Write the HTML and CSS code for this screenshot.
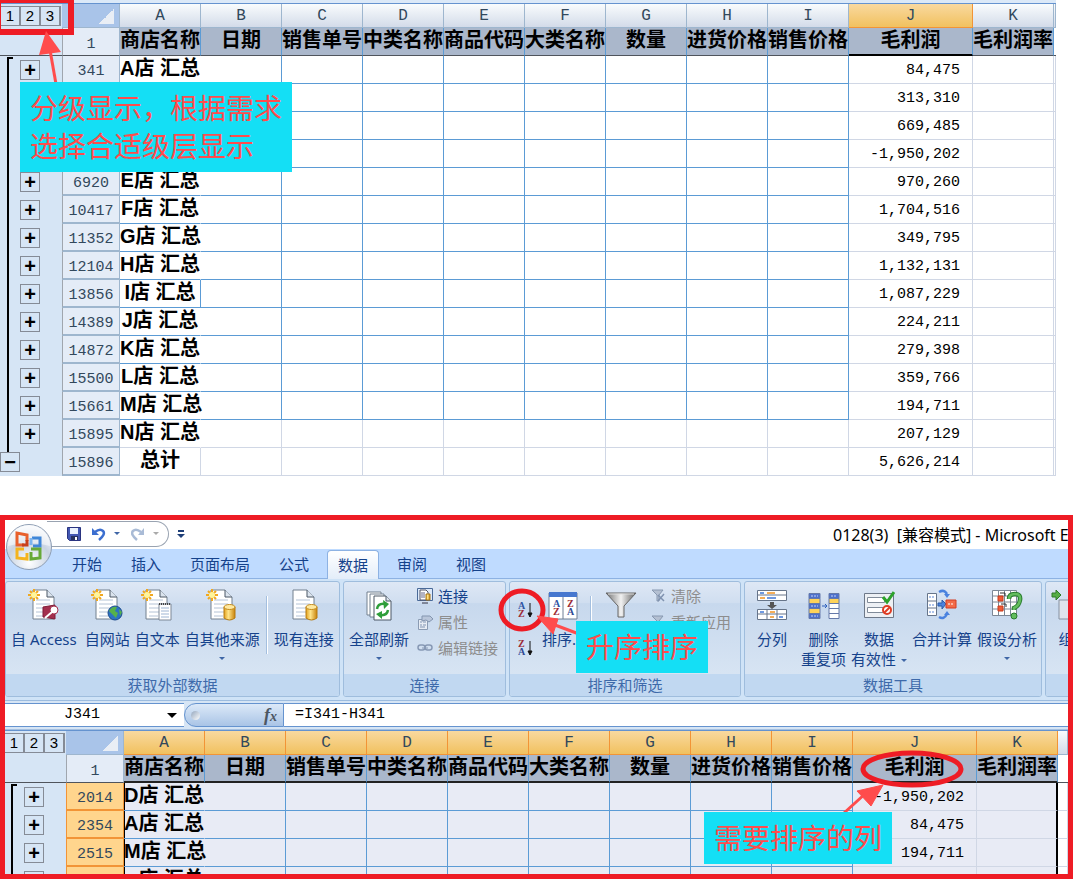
FILE: index.html
```html
<!DOCTYPE html>
<html lang="zh-CN">
<head>
<meta charset="utf-8">
<title>分级显示与升序排序</title>
<link rel="stylesheet" href="styles.css">
</head>
<body>
<svg class="defs" aria-hidden="true">
  <defs>
    <linearGradient id="gold" x1="0" x2="1"><stop offset="0" stop-color="#e2a01c"/><stop offset=".4" stop-color="#ffe58a"/><stop offset="1" stop-color="#c9830b"/></linearGradient>
    <linearGradient id="steel" x1="0" x2="1"><stop offset="0" stop-color="#707070"/><stop offset=".5" stop-color="#f2f2f2"/><stop offset="1" stop-color="#606060"/></linearGradient>
    <g id="page"><path d="M5 1h14l7 7v22H5z" fill="#fff" stroke="#73808f"/><path d="M19 1v7h7" fill="#dbe4ee" stroke="#4d5966"/><path d="M8 11h14M8 15h14M8 19h14M8 23h14M8 27h9" stroke="#b4c3d6"/></g>
    <g id="spark"><path d="M6 0v12M0 6h12M2 2l8 8M10 2l-8 8" stroke="#f0a820" stroke-width="2"/><circle cx="6" cy="6" r="3" fill="#fff59a"/></g>
    <g id="drum"><path d="M0 2v11q5.500 4 11 0V2z" fill="url(#gold)" stroke="#b57b12"/><ellipse cx="5.500" cy="2" rx="5.500" ry="2.500" fill="#ffe9a0" stroke="#c38a1c"/></g>
    <g id="az" font-family="Liberation Serif" font-weight="700" font-size="10"><text x="0" y="8" fill="#2f55a4">A</text><text x="0" y="16" fill="#9c2a35">Z</text></g>
    <g id="za" font-family="Liberation Serif" font-weight="700" font-size="10"><text x="0" y="8" fill="#9c2a35">Z</text><text x="0" y="16" fill="#2f4a94">A</text></g>
    <path id="down" d="M0 0v12M-2 10h4l-2 4z" stroke="#111" fill="#111"/>
  </defs>
</svg>

<section class="outline-demo">
<table class="sheet">
<colgroup><col class="c-gut"><col class="c-num"><col class="c-std" span="9"><col class="c-wide"><col class="c-std"><col></colgroup>
<thead>
<tr class="letters"><td class="gut levels"><div><button>1</button><button>2</button><button>3</button></div></td><th class="corner"></th><th>A</th><th>B</th><th>C</th><th>D</th><th>E</th><th>F</th><th>G</th><th>H</th><th>I</th><th class="on">J</th><th>K</th><th></th></tr>
<tr class="titles"><td class="gut"></td><th class="num">1</th><th>商店名称</th><th>日期</th><th>销售单号</th><th>中类名称</th><th>商品代码</th><th>大类名称</th><th>数量</th><th>进货价格</th><th>销售价格</th><th class="picked">毛利润</th><th>毛利润率</th><th class="rest"></th></tr>
</thead>
<tbody>
<tr><td class="gut line first"><button>+</button></td><th class="num">341</th><td class="shop">A店 汇总</td><td></td><td></td><td></td><td></td><td></td><td></td><td></td><td></td><td class="val">84,475</td><td class="pale"></td><td class="pale"></td></tr>
<tr><td class="gut line"></td><th class="num"></th><td class="shop"></td><td></td><td></td><td></td><td></td><td></td><td></td><td></td><td></td><td class="val">313,310</td><td class="pale"></td><td class="pale"></td></tr>
<tr><td class="gut line"></td><th class="num"></th><td class="shop"></td><td></td><td></td><td></td><td></td><td></td><td></td><td></td><td></td><td class="val">669,485</td><td class="pale"></td><td class="pale"></td></tr>
<tr><td class="gut line"></td><th class="num"></th><td class="shop"></td><td></td><td></td><td></td><td></td><td></td><td></td><td></td><td></td><td class="val">-1,950,202</td><td class="pale"></td><td class="pale"></td></tr>
<tr><td class="gut line"><button>+</button></td><th class="num">6920</th><td class="shop">E店 汇总</td><td></td><td></td><td></td><td></td><td></td><td></td><td></td><td></td><td class="val">970,260</td><td class="pale"></td><td class="pale"></td></tr>
<tr><td class="gut line"><button>+</button></td><th class="num">10417</th><td class="shop">F店 汇总</td><td></td><td></td><td></td><td></td><td></td><td></td><td></td><td></td><td class="val">1,704,516</td><td class="pale"></td><td class="pale"></td></tr>
<tr><td class="gut line"><button>+</button></td><th class="num">11352</th><td class="shop">G店 汇总</td><td></td><td></td><td></td><td></td><td></td><td></td><td></td><td></td><td class="val">349,795</td><td class="pale"></td><td class="pale"></td></tr>
<tr><td class="gut line"><button>+</button></td><th class="num">12104</th><td class="shop">H店 汇总</td><td></td><td></td><td></td><td></td><td></td><td></td><td></td><td></td><td class="val">1,132,131</td><td class="pale"></td><td class="pale"></td></tr>
<tr><td class="gut line"><button>+</button></td><th class="num">13856</th><td class="shop closed">I店 汇总</td><td></td><td></td><td></td><td></td><td></td><td></td><td></td><td></td><td class="val">1,087,229</td><td class="pale"></td><td class="pale"></td></tr>
<tr><td class="gut line"><button>+</button></td><th class="num">14389</th><td class="shop">J店 汇总</td><td></td><td></td><td></td><td></td><td></td><td></td><td></td><td></td><td class="val">224,211</td><td class="pale"></td><td class="pale"></td></tr>
<tr><td class="gut line"><button>+</button></td><th class="num">14872</th><td class="shop">K店 汇总</td><td></td><td></td><td></td><td></td><td></td><td></td><td></td><td></td><td class="val">279,398</td><td class="pale"></td><td class="pale"></td></tr>
<tr><td class="gut line"><button>+</button></td><th class="num">15500</th><td class="shop">L店 汇总</td><td></td><td></td><td></td><td></td><td></td><td></td><td></td><td></td><td class="val">359,766</td><td class="pale"></td><td class="pale"></td></tr>
<tr><td class="gut line"><button>+</button></td><th class="num">15661</th><td class="shop">M店 汇总</td><td></td><td></td><td></td><td></td><td></td><td></td><td></td><td></td><td class="val">194,711</td><td class="pale"></td><td class="pale"></td></tr>
<tr class="faint"><td class="gut line"><button>+</button></td><th class="num">15895</th><td class="shop">N店 汇总</td><td></td><td></td><td></td><td></td><td></td><td></td><td></td><td></td><td class="val">207,129</td><td class="pale"></td><td class="pale"></td></tr>
<tr class="faint"><td class="gut last"><button>−</button></td><th class="num">15896</th><td class="shop closed">总计</td><td></td><td></td><td></td><td></td><td></td><td></td><td></td><td></td><td class="val">5,626,214</td><td class="pale"></td><td class="pale"></td></tr>
</tbody>
</table>
<svg class="marks" aria-hidden="true"><rect x="-2" y="0" width="73" height="32" fill="none" stroke="#ee1c25" stroke-width="6"/><path d="M50 50l6 34" stroke="#ff4c4c" stroke-width="3"/><path d="M46 31l15 21-22 3z" fill="#ff4c4c"/></svg>
<p class="note note-levels">分级显示，根据需求<br>选择合适级层显示</p>
</section>

<section class="excel">
<header class="titlebar">
  <div class="quick">
    <button aria-label="保存"><svg width="14" height="14"><path d="M.500 .500h13v13h-11l-2-2z" fill="#4257b2" stroke="#2a3480"/><path d="M3 1h8v6H3z" fill="#e9f1fd"/><path d="M4 9h7v4H4z" fill="#25305e"/><path d="M8 10h2v3H8z" fill="#fff"/></svg></button>
    <button aria-label="撤消"><svg width="14" height="14"><path d="M3 5q5-4 8-1t-4 9" fill="none" stroke="#3c6fd0" stroke-width="2.500"/><path d="M0 1v7h7z" fill="#3c6fd0"/></svg></button>
    <i class="tri"></i>
    <button aria-label="恢复"><svg width="14" height="14"><path d="M10 5q-5-4-8-1t4 9" fill="none" stroke="#a9bbd6" stroke-width="2.500"/><path d="M13 1v7H7z" fill="#a9bbd6"/></svg></button>
    <i class="tri dim"></i>
  </div>
  <button class="custom" aria-label="自定义快速访问工具栏"><svg width="8" height="9"><path d="M1 1h6" stroke="#1f3f78" stroke-width="2"/><path d="M0 4h8L4 8z" fill="#1f3f78"/></svg></button>
  <span class="doc">0128(3)&nbsp; [兼容模式] - Microsoft Ex</span>
</header>
<button class="orb" aria-label="Office 按钮"><svg width="48" height="48" viewBox="0 0 48 48"><defs><radialGradient id="orb" cx=".5" cy=".85" r=".8"><stop offset="0" stop-color="#fff"/><stop offset=".6" stop-color="#c8d3e2"/><stop offset="1" stop-color="#f4f7fb"/></radialGradient></defs><circle cx="24" cy="24" r="22.500" fill="url(#orb)" stroke="#8d9db3"/><path d="M3 23a21 21 0 0 1 42 0q-21-6-42 0z" fill="#fff" opacity=".5"/><g fill="none" stroke-width="3"><path d="M22 18v-6l-10-2v12h7" stroke="#e8602c"/><path d="M27 15h8v8h-7" stroke="#3f86d8"/><path d="M19 26h-7v9l10 1v-6" stroke="#f4b41e"/><path d="M26 26h9v9l-9 1v-7" stroke="#67a938"/><path d="M22 17v5h-5" stroke="#c8401c"/><path d="M26 22v-7" stroke="#7cb4ee"/></g></svg></button>
<nav class="tabs"><button>开始</button><button>插入</button><button>页面布局</button><button>公式</button><button class="active">数据</button><button>审阅</button><button>视图</button></nav>

<div class="ribbon">
  <div class="group g-ext"><div class="body">
    <button class="big"><svg width="32" height="32"><use href="#page"/><use href="#spark" x="0" y="0"/><path d="M15 18l12-2v14l-12-2z" fill="#a32f4d" stroke="#7f1d38"/><circle cx="26" cy="21" r="4" fill="#fff" stroke="#a32f4d"/><path d="M24 23l-7 6" stroke="#fff" stroke-width="2"/></svg><span>自 Access</span></button>
    <button class="big"><svg width="32" height="32"><use href="#page"/><use href="#spark"/><circle cx="24" cy="24" r="7" fill="#2c72c2" stroke="#1d4c8b"/><path d="M18 22q3-5 8-4l-2 4 3 2-2 5-4-4zM28 20l3 3-2 4z" fill="#56b14a"/></svg><span>自网站</span></button>
    <button class="big"><svg width="32" height="32"><use href="#page"/><use href="#spark"/><path d="M18 15h12v16H18z" fill="#fff" stroke="#7c8796"/><path d="M18 15h12" stroke="#444" stroke-dasharray="1 1" stroke-width="2"/><path d="M20 19h8M20 22h8M20 25h8M20 28h8" stroke="#9eb5d3"/></svg><span>自文本</span></button>
    <button class="big"><svg width="32" height="32"><use href="#page"/><use href="#spark"/><use href="#drum" x="18" y="16"/></svg><span>自其他来源</span><i class="tri"></i></button>
    <hr>
    <button class="big"><svg width="32" height="32"><use href="#page"/><use href="#drum" x="18" y="16"/></svg><span>现有连接</span></button>
  </div><h2>获取外部数据</h2></div>

  <div class="group g-con"><div class="body">
    <button class="big"><svg width="32" height="32"><path d="M4 3h14v23H4z" fill="#fff" stroke="#73808f"/><path d="M7 5h14v23H7z" fill="#fff" stroke="#73808f"/><path d="M11 7h12l5 5v19H11z" fill="#fff" stroke="#4d5966"/><path d="M23 7v5h5" fill="#dbe4ee" stroke="#4d5966"/><path d="M14 20q1-6 8-5M25 21q-1 6-8 5" fill="none" stroke="#2f9e3a" stroke-width="2.500"/><path d="M20 11l6 4-5 5zM19 30l-6-5 6-3z" fill="#2f9e3a"/></svg><span>全部刷新</span><i class="tri"></i></button>
    <div class="list">
      <button><svg width="16" height="16"><path d="M.500 .500h15v12H.500z" fill="#dce9fa" stroke="#4a6a98"/><path d="M3 2h6l2 2v8H3z" fill="#fff" stroke="#556"/><path d="M4 5h4M4 7h4M4 9h4" stroke="#668"/><path d="M9 6h4v6H9z" fill="url(#gold)" stroke="#a6761a"/><path d="M5 15h6" stroke="#334"/></svg>连接</button>
      <button disabled><svg width="16" height="16"><path d="M1.500 5.500h9v10h-9z" fill="#e7ecf4" stroke="#8a9bb3"/><path d="M3 8h2M3 11h2M6 8h3M6 11h3M3 13h5" stroke="#8195b3"/><path d="M5 2h8l3 3-4 3-3-2-4 1z" fill="#b9c6da" stroke="#8395af"/></svg>属性</button>
      <button disabled><svg width="16" height="16"><rect x="1" y="5" width="7" height="5" rx="2.500" fill="none" stroke="#8799b5" stroke-width="1.500"/><rect x="8" y="5" width="7" height="5" rx="2.500" fill="none" stroke="#8799b5" stroke-width="1.500"/><path d="M5 8h6" stroke="#8799b5"/></svg>编辑链接</button>
    </div>
  </div><h2>连接</h2></div>

  <div class="group g-sort"><div class="body">
    <div class="sorts">
      <button aria-label="升序"><svg width="16" height="17"><use href="#az"/><use href="#down" x="12" y="2"/></svg></button>
      <button aria-label="降序"><svg width="16" height="17"><use href="#za"/><use href="#down" x="12" y="2"/></svg></button>
    </div>
    <button class="big sort"><svg width="32" height="32"><path d="M2 4h28v26H2z" fill="#fff" stroke="#6f7f95"/><path d="M2 3h28v5H2z" fill="#4677cf"/><path d="M16 8v22" stroke="#6f7f95"/><use href="#az" x="6" y="10"/><use href="#za" x="20" y="10"/></svg><span>排序...</span></button>
    <hr>
    <button class="big filter" aria-label="筛选"><svg width="32" height="32"><path d="M1 4h30L19 17v11h-6V17z" fill="url(#steel)" stroke="#666"/><path d="M3 5h26" stroke="#ddd"/></svg></button>
    <div class="list">
      <button disabled><svg width="16" height="16"><path d="M2 2h11L9 7v6H7V7z" fill="#b4c0d2" stroke="#8798b0"/><path d="M8 7l6 6M14 6l-6 7" stroke="#8093b0" stroke-width="1.500"/></svg>清除</button>
      <button disabled><svg width="16" height="16"><path d="M2 2h11L9 7v6H7V7z" fill="#b4c0d2" stroke="#8798b0"/></svg>重新应用</button>
    </div>
  </div><h2>排序和筛选</h2></div>

  <div class="group g-tools"><div class="body">
    <button class="big"><svg width="32" height="32"><path d="M1.500 1.500h29v10h-29zM1.500 20.500h29v10h-29z" fill="#fff" stroke="#66758a"/><path d="M1 6h30M1 25h30M11 20v10M21 20v10" stroke="#66758a"/><path d="M4 4h4M11 9h9M4 23h4M23 28h4" stroke="#3f78d8" stroke-width="1.500"/><path d="M11 4h8M4 9h5M14 23h5M14 28h4" stroke="#f29422" stroke-width="1.500"/><path d="M14 13h4v3h3l-5 4-5-4h3z" fill="#555"/></svg><span>分列</span></button>
    <button class="big"><svg width="32" height="32"><g stroke="#6579a9"><path d="M1 4.500h11v5H1zM1 14.500h11v5H1zM1 24.500h11v5H1zM21 4.500h10v5H21z" fill="#4d70cb"/><path d="M1 9.500h11v5H1zM1 19.500h11v5H1zM21 9.500h10v5H21z" fill="#ffd35a"/><path d="M21 14.500h10v5H21zM21 19.500h10v5H21zM21 24.500h10v5H21z" fill="#fff"/></g><path d="M14 17h5M17 15l2 2-2 2" fill="none" stroke="#2e61bd"/><path d="M3 7h7M3 17h7M3 27h7M23 7h6" stroke="#c4d3f7" stroke-dasharray="2 1"/></svg><span>删除<br>重复项</span></button>
    <button class="big"><svg width="32" height="32"><path d="M1.500 4.500h29v24h-29z" fill="#edf0f4" stroke="#6d7888"/><path d="M4.500 8.500h17v5h-17zM4.500 18.500h17v5h-17z" fill="#fff" stroke="#808b99"/><path d="M20 8l4 5 7-10" fill="none" stroke="#2ca22c" stroke-width="3"/><circle cx="24" cy="21" r="4" fill="#fff" stroke="#df3d24" stroke-width="2"/><path d="M21 24l6-6" stroke="#df3d24" stroke-width="2"/></svg><span>数据<br>有效性 <i class="tri inline"></i></span></button>
    <button class="big"><svg width="32" height="32"><path d="M1.500 4.500h9v22h-9zM1.500 12h9M1.500 19h9" fill="#fff" stroke="#66758a"/><path d="M3 8h6M3 16h6M3 23h6" stroke="#5a87d8" stroke-dasharray="2 1"/><path d="M12 14h4v-3l4 4-4 5v-3h-4z" fill="#4a82df" stroke="#2d5ca9"/><path d="M20 11h10v8H20z" fill="#f36b48" stroke="#d33d22"/><path d="M22 15h6" stroke="#fff" stroke-dasharray="2 1"/><path d="M13 3q5-3 8 2M13 28q5 3 8-3" fill="none" stroke="#4a82df" stroke-width="2.500"/><path d="M18 5h6l-3 4zM18 26h6l-3-4z" fill="#4a82df"/></svg><span>合并计算</span></button>
    <button class="big"><svg width="32" height="32"><path d="M1.500 1.500h24v25h-24zM7.500 1v26M13.500 1v26M19.500 1v26M1 7h25M1 13h25M1 20h25" fill="#fff" stroke="#7d8896"/><path d="M7 7h5v5H7zM7 17h5v5H7z" fill="#f05a35" stroke="#c63a1b"/><path d="M9 4h5v3M10 15h5v3" fill="none" stroke="#333"/><path d="M18 10q0-5 6-5t5 6-6 8v2" fill="none" stroke="#287c2e" stroke-width="4.500"/><path d="M18 10q0-5 6-5t5 6-6 8v2" fill="none" stroke="#63bd5e" stroke-width="2.500"/><circle cx="23" cy="27" r="3" fill="#63bd5e" stroke="#287c2e"/></svg><span>假设分析</span><i class="tri"></i></button>
  </div><h2>数据工具</h2></div>

  <div class="group g-outline"><div class="body">
    <button class="big"><svg width="32" height="32"><path d="M2 4h4V1l5 5-5 5V8H2z" fill="#55ae45" stroke="#2e7b28"/><path d="M9 11h16v19H9z" fill="#dfe4ec" stroke="#8791a0"/></svg><span>组</span></button>
  </div><h2></h2></div>
</div>

<div class="formula">
  <div class="namebox"><input aria-label="名称框" value="J341"><i></i></div>
  <div class="fx"><i></i><button aria-label="插入函数"><em>f</em><small>x</small></button></div>
  <input class="expr" aria-label="编辑栏" value="=I341-H341">
</div>

<div class="pane">
<table class="sheet selected">
<colgroup><col class="c-gut"><col class="c-num"><col class="c-std" span="9"><col class="c-wide"><col class="c-std"><col></colgroup>
<thead>
<tr class="letters"><td class="gut levels"><div><button>1</button><button>2</button><button>3</button></div></td><th class="corner"></th><th class="on">A</th><th class="on">B</th><th class="on">C</th><th class="on">D</th><th class="on">E</th><th class="on">F</th><th class="on">G</th><th class="on">H</th><th class="on">I</th><th class="on">J</th><th class="on">K</th><th></th></tr>
<tr class="titles"><td class="gut"></td><th class="num">1</th><th>商店名称</th><th>日期</th><th>销售单号</th><th>中类名称</th><th>商品代码</th><th>大类名称</th><th>数量</th><th>进货价格</th><th>销售价格</th><th>毛利润</th><th>毛利润率</th><th class="rest"></th></tr>
</thead>
<tbody>
<tr><td class="gut line first"><button>+</button></td><th class="num">2014</th><td class="shop">D店 汇总</td><td></td><td></td><td></td><td></td><td></td><td></td><td></td><td></td><td class="val">-1,950,202</td><td class="pale edge"></td><td class="pale out"></td></tr>
<tr><td class="gut line"><button>+</button></td><th class="num">2354</th><td class="shop">A店 汇总</td><td></td><td></td><td></td><td></td><td></td><td></td><td></td><td></td><td class="val">84,475</td><td class="pale edge"></td><td class="pale out"></td></tr>
<tr><td class="gut line"><button>+</button></td><th class="num">2515</th><td class="shop">M店 汇总</td><td></td><td></td><td></td><td></td><td></td><td></td><td></td><td></td><td class="val">194,711</td><td class="pale edge"></td><td class="pale out"></td></tr>
<tr><td class="gut line"><button aria-label="展开"></button></td><th class="num"></th><td class="shop cut">店 汇总</td><td></td><td></td><td></td><td></td><td></td><td></td><td></td><td></td><td class="val"></td><td class="pale edge"></td><td class="pale out"></td></tr>
</tbody>
</table>
</div>
<svg class="marks" aria-hidden="true"><g fill="none" stroke="#ee1c25" stroke-width="5"><ellipse cx="517" cy="90" rx="21" ry="19"/><ellipse cx="907" cy="249" rx="49" ry="16"/></g><g fill="#ff4c4c" stroke="#ff4c4c"><path d="M550 105l24 9M861 273l-22 20" stroke-width="3"/><path d="M532 96l21 3-5 15zM878 265l-26 6 14 15z"/></g></svg>
<p class="note note-sort">升序排序</p>
<p class="note note-column">需要排序的列</p>
</section>
</body>
</html>
```

FILE: styles.css
```css
* { box-sizing: border-box; }
body { margin: 0; height: 100vh; display: flex; flex-direction: column; gap: 39px; background: #fff; overflow: hidden; font: 15px/20px "Noto Sans", "Noto Sans CJK SC", sans-serif; }
button { border: 0; padding: 0; background: none; font: inherit; color: inherit; }
input { border: 0; padding: 0; background: none; font: 15px/20px "Liberation Mono", monospace; color: #000; min-width: 0; outline: 0; }
svg { display: block; }
.defs { position: absolute; width: 0; height: 0; }
.marks { position: absolute; inset: 0; width: 100%; height: 100%; pointer-events: none; }
.note { position: absolute; margin: 0; padding: 7px 10px; background: #14dff5; color: #ff4c4c; font-size: 28px; line-height: 38px; white-space: nowrap; }
.note-levels { left: 20px; top: 82px; }
.note-sort { left: 571px; top: 101px; }
.note-column { left: 699px; top: 292px; }

/* worksheet */
.outline-demo { position: relative; flex: none; margin-right: 17px; padding-top: 3px; overflow: hidden; background: #dbe9f8; }
.sheet { width: 100%; table-layout: fixed; border-collapse: separate; border-spacing: 0; background: #fff; border-top: 1px solid #6593cf; }
.c-gut { width: 62px; }
.c-num { width: 58px; }
.c-std { width: 81px; }
.c-wide { width: 124px; }
.sheet th, .sheet td { height: 28px; padding: 0; font-size: 20px; line-height: 26px; white-space: nowrap; border-right: 1px solid #5b9bd5; border-bottom: 1px solid #5b9bd5; }
.sheet .letters th, .sheet .letters td { height: 24px; }
.sheet .letters th { font: 16px/22px "Liberation Mono", monospace; color: #32485c; background: linear-gradient(#f9fcfd, #d3dbe9); border-color: #9eb6ce; }
.sheet .letters .on { background: linear-gradient(#f9d99f, #f1c15f); border-color: #f29436; }
.sheet .letters .corner { background: linear-gradient(135deg, transparent 50%, #e9eef5 50%) 37px 5px / 15px 15px no-repeat, #a9c4e9; }
.sheet .titles th { background: #aab7cb; border-bottom-color: #4f545c; font: 700 20px/26px "Liberation Sans", "Noto Sans CJK SC", sans-serif; overflow: hidden; }
.sheet .titles .picked { border-bottom: 2px solid #000; }
.sheet .titles .rest { background: #fff; border-right: 0; }
.sheet .num, .sheet .titles .num { background: #e4ecf7; border-color: #9eb6ce; border-left: 1px solid #a0a6ae; font: 15px/20px "Liberation Mono", monospace; color: #32485c; vertical-align: bottom; }
.sheet tbody .num { border-bottom-width: 2px; }
.sheet .titles .num { border-bottom: 1px solid #4f545c; }
.sheet .shop { border-right-color: transparent; text-align: center; font: 700 20px/26px "Liberation Sans", "Noto Sans CJK SC", sans-serif; }
.sheet tbody .shop, .sheet .titles th { vertical-align: top; line-height: 24px; }
.sheet .closed { border-right-color: #5b9bd5; }
.sheet .val { padding: 2px 12px 0 0; text-align: right; font: 15px/24px "Liberation Mono", monospace; border-color: #d0d7e5; }
.sheet .pale, .sheet .faint td { border-color: #d0d7e5; }
.sheet .faint .shop:not(.closed) { border-right-color: transparent; }
.sheet td.gut { background-color: #d6e5f5; border: 0; font: 700 20px/16px "Liberation Sans", sans-serif; vertical-align: middle; }
.sheet .titles td.gut { border-bottom: 1px solid #4f545c; }
.sheet .titles .num { vertical-align: bottom; line-height: 20px; }
.sheet .line { background: linear-gradient(#000, #000) 7px 0 / 2px 100% no-repeat; }
.sheet .first { background: linear-gradient(#000, #000) 7px 2px / 2px 100% no-repeat, linear-gradient(#000, #000) 7px 1px / 6px 2px no-repeat; }
.sheet .last { background: linear-gradient(#000, #000) 7px 0 / 2px 4px no-repeat; }
.gut button { display: block; width: 20px; height: 20px; margin-left: 20px; border: 1px solid #858b96; color: #000; }
.gut.last button { margin-left: 0; }
.levels div { display: flex; }
.levels button, .gut.levels button { margin: 0; font: 15px/18px "Liberation Sans", sans-serif; box-shadow: 1px 0 #858b96; }

/* application window */
.excel { position: relative; flex: 1; min-height: 0; display: flex; flex-direction: column; border: 5px solid #ee1c25; overflow: hidden; background: #d6e5f5; }
.titlebar { flex: none; height: 29px; display: flex; align-items: center; gap: 8px; padding-left: 42px; background: #fff; }
.quick { display: flex; align-items: center; gap: 11px; width: 122px; height: 26px; padding-left: 20px; border: 1px solid #99a3b1; border-left: 0; border-radius: 0 13px 13px 0; margin-bottom: 2px; }
.tri { display: block; border: 3px solid transparent; border-top-color: #3f66a6; border-bottom: 0; }
.quick .tri { margin-left: -3px; }
.quick .tri.dim { border-top-color: #aaa; }
.tri.inline { display: inline-block; vertical-align: middle; margin-left: 1px; }
.doc { margin-left: auto; flex: 0 0 235px; overflow: hidden; white-space: nowrap; font-size: 16px; }
.orb { position: absolute; left: 0; top: 3px; }
.tabs { flex: none; height: 30px; display: flex; align-items: flex-end; gap: 7px; padding-left: 56px; background: #bfdbff; border-bottom: 1px solid #8db2e3; color: #15428b; }
.tabs button { height: 28px; padding: 0 11px; }
.tabs .active { height: 29px; background: linear-gradient(#fff, #e3edf9); border: 1px solid #8db2e3; border-bottom: 0; border-radius: 4px 4px 0 0; padding: 0 10px; margin-bottom: -1px; }
.ribbon { flex: none; display: flex; gap: 3px; padding: 2px 0 3px; background: #cfe3f7; border-bottom: 1px solid #9cbcdf; overflow: hidden; color: #15428b; }
.group { flex: none; display: flex; flex-direction: column; border: 1px solid #9fbddd; border-radius: 3px; background: linear-gradient(#dee8f5, #d0def0 18%, #c7d8ed 19%, #dce8f5); overflow: hidden; }
.g-ext { width: 335px; }
.g-con { width: 163px; }
.g-sort { width: 232px; }
.g-tools { width: 298px; }
.g-outline { flex: 1 0 60px; }
.body { display: flex; gap: 5px; height: 92px; padding: 7px 5px 0; }
.group h2 { margin: 0; height: 22px; background: #c1d8f1; color: #3e6aaa; font-size: 15px; font-weight: 400; line-height: 22px; text-align: center; }
.big { display: flex; flex-direction: column; align-items: center; height: 82px; white-space: nowrap; }
.big span { margin-top: 8px; }
.big > .tri { margin-top: 8px; }
.body hr { width: 2px; height: 58px; margin: 7px 1px; border: 0; border-left: 1px solid #a4bfdf; border-right: 1px solid #fff; flex: none; }
.list { display: flex; flex-direction: column; gap: 6px; margin: -3px 0 0 3px; }
.list button { display: flex; align-items: center; gap: 5px; height: 20px; white-space: nowrap; }
.list button:disabled { color: #8d8d8d; }
.sorts { display: flex; flex-direction: column; gap: 21px; padding: 12px 0 0 3px; }
.big.sort { margin-left: 3px; width: 42px; }
.filter { width: 46px; }
.g-sort .list { margin-left: 1px; }
.g-ext .big:first-child { margin-right: 3px; }
.g-tools .body { padding-left: 11px; }
.g-tools .big:first-child { margin-right: 8px; }
.g-outline .body { padding-left: 4px; }

.formula { flex: none; display: flex; height: 27px; margin-top: 2px; padding-bottom: 2px; border-bottom: 1px solid #a5c0e0; background: #d6e5f5; }
.namebox { width: 179px; display: flex; align-items: center; background: #fff; border: 1px solid #6593cf; border-left: 0; border-right: 0; }
.namebox input { flex: 1; padding-left: 59px; }
.namebox i { border: 5px solid transparent; border-top-color: #000; border-bottom: 0; margin-right: 7px; }
.fx { width: 100px; display: flex; align-items: center; justify-content: space-between; padding: 0 6px; border: 1px solid #6593cf; border-radius: 13px 0 0 13px; background: linear-gradient(#dce9f8, #a9c4e6); }
.fx i { width: 9px; height: 9px; border-radius: 50%; background: linear-gradient(135deg, #94a6bd, #fff); }
.fx button { display: flex; align-items: baseline; font: 700 18px/20px "Liberation Serif", serif; color: #4c5663; }
.fx small { font: italic 700 14px/14px "Liberation Serif", serif; }
.expr { flex: 1; padding-left: 11px; background: #fff; border-top: 1px solid #6593cf; border-bottom: 1px solid #6593cf; }

.pane { flex: 1; min-height: 0; overflow: hidden; margin-left: -1px; }
.selected tbody td { background-color: #e8ebf5; }
.selected tbody .num { background: #ffd58d; border-color: #f29436; }
.selected .titles th { border-bottom: 2px solid #222; }
.selected .titles .num, .selected .titles .rest { border-bottom: 1px solid #4f545c; }
.selected tbody .shop { box-shadow: inset 1px 0 #000; }
.selected tbody .edge { border-right: 2px solid #000; }
.selected tbody .out { background: #fff; }
.sheet .cut { padding-left: 14px; }
```
